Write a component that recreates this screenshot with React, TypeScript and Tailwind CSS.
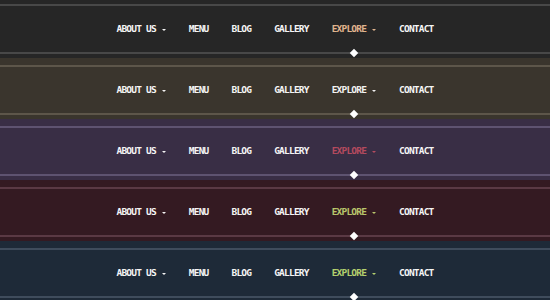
const themes = [
  { bg: "bg-[#262626]", line: "border-[#484848]", accent: "text-[#e0b48e]", first: true },
  { bg: "bg-[#3a352d]", line: "border-[#5d564a]", accent: "text-[#f2f2f2]", first: false },
  { bg: "bg-[#392e45]", line: "border-[#5e5370]", accent: "text-[#b44a5e]", first: false },
  { bg: "bg-[#341a22]", line: "border-[#5a3944]", accent: "text-[#b9c66c]", first: false },
  { bg: "bg-[#1e2a38]", line: "border-[#3f4c5c]", accent: "text-[#b4d06e]", first: false },
];

const items = [
  { label: "About us", caret: true },
  { label: "Menu" },
  { label: "Blog" },
  { label: "Gallery" },
  { label: "Explore", caret: true, active: true },
  { label: "Contact" },
];

function Caret() {
  return <span className="ml-[6px] mt-[2px] inline-block h-0 w-0 border-x-[2px] border-t-[2px] border-x-transparent border-t-current" />;
}

function NavBar({ theme }: { theme: (typeof themes)[number] }) {
  return (
    <div className={`${theme.bg} h-[61px] pt-[7px] ${theme.first ? "-mt-[3px]" : ""}`}>
      <nav className={`h-[50px] border-y-2 ${theme.line}`}>
        <ul className="flex h-full justify-center">
          {items.map((item) => (
            <li
              key={item.label}
              className={`relative flex items-center px-[11.5px] text-[9.5px] font-bold uppercase tracking-[-0.8px] ${
                item.active ? theme.accent : "text-[#f5f5f5]"
              }`}
            >
              {item.label}
              {item.caret && <Caret />}
              {item.active && (
                <span className="absolute bottom-[-4px] left-1/2 h-[6px] w-[6px] -translate-x-1/2 rotate-45 bg-white" />
              )}
            </li>
          ))}
        </ul>
      </nav>
    </div>
  );
}

export default function App() {
  return (
    <div className="h-[300px] w-[550px] overflow-hidden bg-[#1e2a38] font-['DejaVu_Sans_Mono',monospace]">
      {themes.map((t, i) => (
        <NavBar key={i} theme={t} />
      ))}
    </div>
  );
}
